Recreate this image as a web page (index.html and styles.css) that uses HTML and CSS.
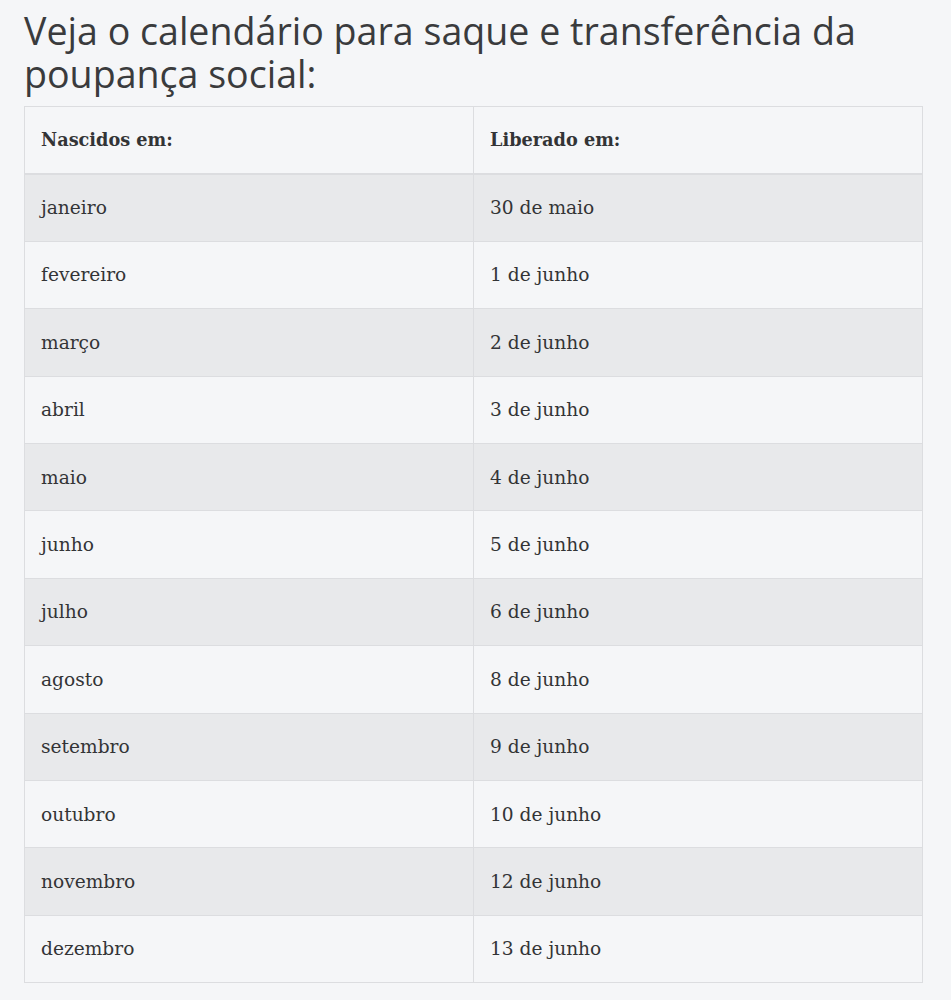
FILE: index.html
```html
<!DOCTYPE html>
<html lang="pt">
<head>
<meta charset="utf-8">
<link rel="stylesheet" href="styles.css">
</head>
<body>
<div class="page">
  <h2 class="title">Veja o calendário para saque e transferência da poupança social:</h2>
  <table class="cal">
    <thead>
      <tr><th>Nascidos em:</th><th>Liberado em:</th></tr>
    </thead>
    <tbody>
      <tr><td>janeiro</td><td>30 de maio</td></tr>
      <tr><td>fevereiro</td><td>1 de junho</td></tr>
      <tr><td>março</td><td>2 de junho</td></tr>
      <tr><td>abril</td><td>3 de junho</td></tr>
      <tr><td>maio</td><td>4 de junho</td></tr>
      <tr><td>junho</td><td>5 de junho</td></tr>
      <tr><td>julho</td><td>6 de junho</td></tr>
      <tr><td>agosto</td><td>8 de junho</td></tr>
      <tr><td>setembro</td><td>9 de junho</td></tr>
      <tr><td>outubro</td><td>10 de junho</td></tr>
      <tr><td>novembro</td><td>12 de junho</td></tr>
      <tr><td>dezembro</td><td>13 de junho</td></tr>
    </tbody>
  </table>
</div>
</body>
</html>
```
FILE: styles.css
```css
html, body {
  margin: 0;
  padding: 0;
  background: #f5f6f8;
}
.page {
  padding: 9px 28px 0 24px;
}
.title {
  margin: 0 0 11px 0;
  font-family: "Open Sans", sans-serif;
  font-weight: 400;
  font-size: 37.6px;
  line-height: 43px;
  color: #3a3b3d;
}
.cal {
  width: 899px;
  border-collapse: collapse;
  table-layout: fixed;
  font-family: "DejaVu Serif", serif;
  font-size: 18.6px;
  color: #333436;
  background: #f5f6f8;
  border: 1px solid #dcdde0;
}
.cal th, .cal td {
  height: 67.4px;
  padding: 0 16px;
  text-align: left;
  border: 1px solid #dcdde0;
  box-sizing: border-box;
}
.cal th {
  font-weight: 700;
  font-size: 17.7px;
  border-bottom: 2px solid #dcdde0;
}
.cal tbody tr:nth-child(odd) td {
  background: #e8e9eb;
}
```
